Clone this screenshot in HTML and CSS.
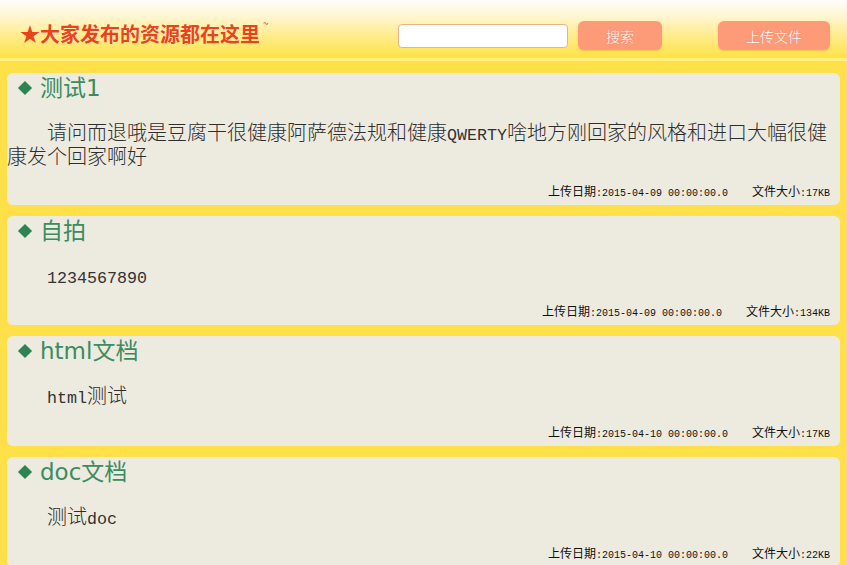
FILE: index.html
```html
<!DOCTYPE html>
<html lang="zh-CN">
<head>
<meta charset="utf-8">
<title>资源列表</title>
<link rel="stylesheet" href="styles.css">
</head>
<body>
<header class="top">
  <div class="logo">★大家发布的资源都在这里<span class="tilde">~</span></div>
  <input class="search-box" type="text">
  <button class="btn btn-search">搜索</button>
  <button class="btn btn-upload">上传文件</button>
</header>
<main class="list">
  <section class="card">
    <h2 class="title"><span class="dot"></span><span class="ttext">测试1</span></h2>
    <p class="desc">请问而退哦是豆腐干很健康阿萨德法规和健康<span class="lat">QWERTY</span>啥地方刚回家的风格和进口大幅很健康发个回家啊好</p>
    <div class="meta"><span>上传日期<span class="mono">:2015-04-09 00:00:00.0</span></span><span class="size">文件大小<span class="mono">:17KB</span></span></div>
  </section>
  <section class="card">
    <h2 class="title"><span class="dot"></span><span class="ttext">自拍</span></h2>
    <p class="desc"><span class="lat">1234567890</span></p>
    <div class="meta"><span>上传日期<span class="mono">:2015-04-09 00:00:00.0</span></span><span class="size">文件大小<span class="mono">:134KB</span></span></div>
  </section>
  <section class="card">
    <h2 class="title"><span class="dot"></span><span class="ttext">html文档</span></h2>
    <p class="desc"><span class="lat">html</span>测试</p>
    <div class="meta"><span>上传日期<span class="mono">:2015-04-10 00:00:00.0</span></span><span class="size">文件大小<span class="mono">:17KB</span></span></div>
  </section>
  <section class="card">
    <h2 class="title"><span class="dot"></span><span class="ttext">doc文档</span></h2>
    <p class="desc">测试<span class="lat">doc</span></p>
    <div class="meta"><span>上传日期<span class="mono">:2015-04-10 00:00:00.0</span></span><span class="size">文件大小<span class="mono">:22KB</span></span></div>
  </section>
</main>
</body>
</html>
```

FILE: styles.css
```css
* { box-sizing: border-box; }
html, body { margin: 0; padding: 0; }
body {
  background: #ffe049;
  font-family: "Noto Sans CJK SC", sans-serif;
  overflow: hidden;
}
.top {
  height: 61px;
  display: flex;
  align-items: center;
  padding: 13px 17px 0 20px;
  background: linear-gradient(to bottom, #fffefa 0%, #fff6d2 28%, #ffec8c 62%, #ffe243 100%);
  border-bottom: 3px solid #fff07e;
}
.logo {
  width: 378px;
  margin-bottom: 4px;
  color: #e8441a;
  font-weight: 700;
  font-size: 20px;
  line-height: 24px;
  text-shadow: 0 0 1px rgba(255,255,255,0.8);
  display: flex;
  align-items: flex-start;
}
.tilde {
  font-size: 10px;
  line-height: 10px;
  font-weight: 400;
  margin-left: 3px;
  margin-top: -4px;
}
.search-box {
  width: 170px;
  height: 24px;
  margin: 0 10px 0 0;
  border: 1px solid #e8b487;
  border-radius: 4px;
  background: #fff;
  padding: 0 4px;
  outline: none;
}
.btn {
  height: 29px;
  border: none;
  border-radius: 6px;
  background: #fd9a78;
  color: #fff;
  font-family: "Noto Sans CJK SC", sans-serif;
  font-size: 14px;
  font-weight: 300;
  padding: 0;
  box-shadow: 0 1px 2px rgba(200,120,60,0.35);
  text-shadow: 0 0 1px rgba(180,80,40,0.4);
}
.btn-search { width: 84px; }
.btn-upload { width: 112px; margin-left: auto; }
.list {
  padding: 12px 7px 0 7px;
  display: flex;
  flex-direction: column;
  gap: 11px;
}
.card {
  background: #edebe0;
  border-radius: 6px;
  padding: 0 10px 6px 0;
}
.title {
  margin: 0;
  height: 30px;
  display: flex;
  align-items: center;
  padding-left: 10px;
  font-weight: 400;
}
.ttext {
  font-family: "DejaVu Sans", "Noto Sans CJK SC", sans-serif;
  font-size: 23px;
  line-height: 30px;
  height: 30px;
  color: #3b8c5e;
}
.dot {
  display: inline-block;
  width: 10px;
  height: 10px;
  background: #2e8354;
  transform: rotate(45deg);
  margin: 0 10px 0 3px;
  flex: none;
}
.desc {
  margin: 18px 0 0 0;
  text-indent: 40px;
  font-size: 20px;
  line-height: 22px;
  color: #2e2e2e;
  font-family: "Noto Sans CJK SC", serif;
  font-weight: 300;
}
.lat {
  font-family: "Liberation Mono", monospace;
  font-size: 16.67px;
  line-height: 1;
  font-weight: 400;
  color: #333;
}
.meta {
  margin-top: 16px;
  height: 16px;
  line-height: 16px;
  text-align: right;
  font-size: 12px;
  color: #111;
  overflow: hidden;
}
.mono {
  font-family: "Liberation Mono", monospace;
  font-size: 10px;
  line-height: 1;
}
.size { margin-left: 24px; }
```
